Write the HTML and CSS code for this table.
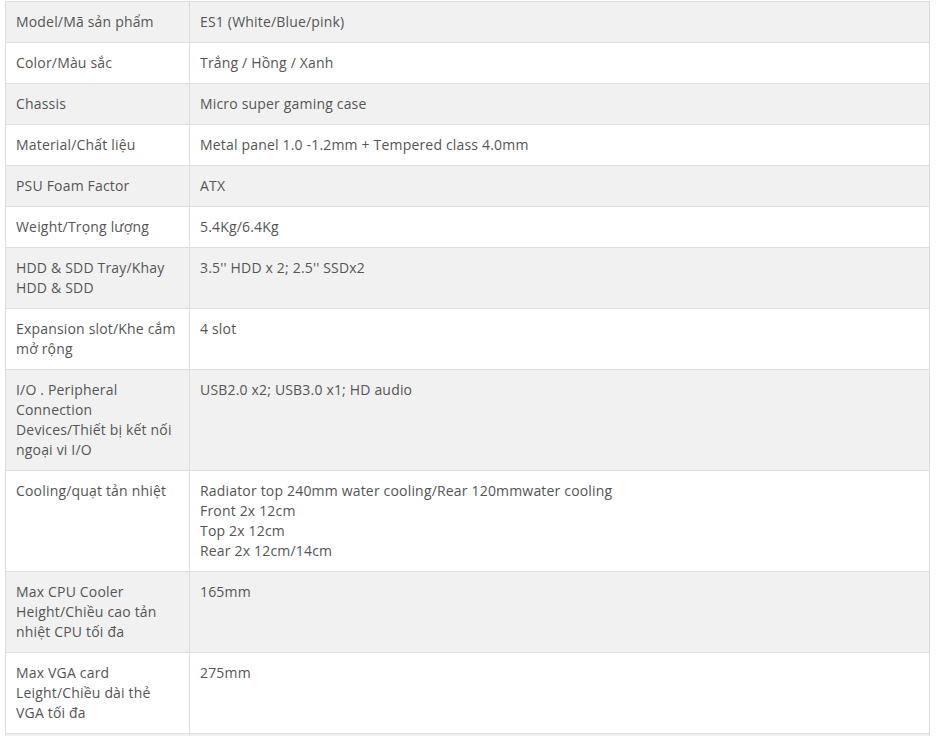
FILE: index.html
```html
<!DOCTYPE html>
<html>
<head>
<meta charset="utf-8">
<link rel="stylesheet" href="styles.css">
</head>
<body>
<table class="spec">
  <colgroup><col class="c1"><col class="c2"></colgroup>
  <tbody>
    <tr><td>Model/Mã sản phẩm</td><td>ES1 (White/Blue/pink)</td></tr>
    <tr><td>Color/Màu sắc</td><td>Trắng / Hồng / Xanh</td></tr>
    <tr><td>Chassis</td><td>Micro super gaming case</td></tr>
    <tr><td>Material/Chất liệu</td><td>Metal panel 1.0 -1.2mm + Tempered class 4.0mm</td></tr>
    <tr><td>PSU Foam Factor</td><td>ATX</td></tr>
    <tr><td>Weight/Trọng lượng</td><td>5.4Kg/6.4Kg</td></tr>
    <tr><td>HDD &amp; SDD Tray/Khay HDD &amp; SDD</td><td>3.5'' HDD x 2; 2.5'' SSDx2</td></tr>
    <tr><td>Expansion slot/Khe cắm mở rộng</td><td>4 slot</td></tr>
    <tr><td>I/O . Peripheral Connection Devices/Thiết bị kết nối ngoại vi I/O</td><td>USB2.0 x2; USB3.0 x1; HD audio</td></tr>
    <tr><td>Cooling/quạt tản nhiệt</td><td>Radiator top 240mm water cooling/Rear 120mmwater cooling<br>Front 2x 12cm<br>Top 2x 12cm<br>Rear 2x 12cm/14cm</td></tr>
    <tr><td>Max CPU Cooler Height/Chiều cao tản nhiệt CPU tối đa</td><td>165mm</td></tr>
    <tr><td>Max VGA card Leight/Chiều dài thẻ VGA tối đa</td><td>275mm</td></tr>
    <tr><td>&nbsp;</td><td>&nbsp;</td></tr>
  </tbody>
</table>
</body>
</html>
```
FILE: styles.css
```css
html, body {
  margin: 0;
  padding: 0;
  background: #fff;
}
body {
  padding: 1px 0 0 5px;
}
.spec {
  border-collapse: collapse;
  table-layout: fixed;
  width: 925px;
  font-family: "Open Sans", "Noto Sans", sans-serif;
  font-size: 14px;
  line-height: 20px;
  letter-spacing: 0.18px;
  color: #555;
}
.spec .c1 { width: 184px; }
.spec td {
  border: 1px solid #ddd;
  padding: 10px;
  vertical-align: top;
  text-align: left;
}
.spec tr:nth-child(odd) td {
  background: #f1f1f1;
}
```
